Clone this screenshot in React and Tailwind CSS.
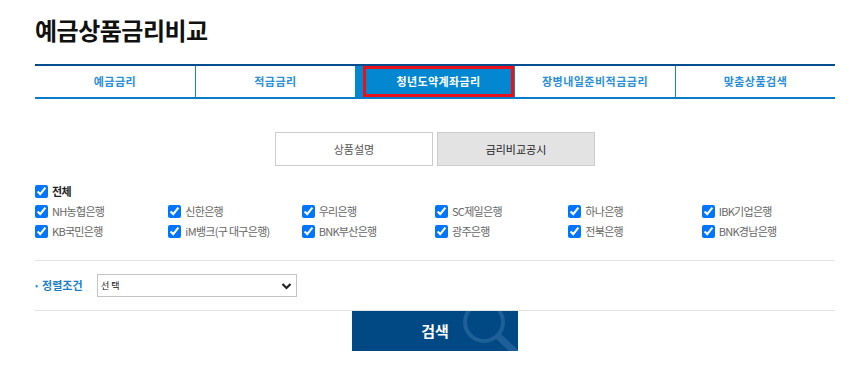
import React from "react";

const font = { fontFamily: '"Noto Sans CJK KR", "Noto Sans", sans-serif' };

const tabs = ["예금금리", "적금금리", "청년도약계좌금리", "장병내일준비적금금리", "맞춤상품검색"];
const banks = [
  "NH농협은행", "신한은행", "우리은행", "SC제일은행", "하나은행", "IBK기업은행",
  "KB국민은행", "iM뱅크(구 대구은행)", "BNK부산은행", "광주은행", "전북은행", "BNK경남은행",
];

function Check({ label, bold }) {
  return (
    <label className="flex items-center h-[20px]">
      <input type="checkbox" defaultChecked className="w-[13px] h-[13px] m-0 accent-[#0075ff]" />
      <span className={`ml-[4px] text-[11px] tracking-[-0.7px] ${bold ? "font-bold text-[#222]" : "text-[#666]"}`}>{label}</span>
    </label>
  );
}

export default function App() {
  return (
    <div className="bg-white w-[857px] h-[371px] overflow-hidden" style={font}>
      <div className="ml-[35px] w-[800px]">
        <h1 className="pt-[15px] h-[64px] text-[24px] leading-[30px] font-bold text-[#111] tracking-[-0.5px]">예금상품금리비교</h1>
        <div className="flex h-[35px] border-t-2 border-t-[#034d8e] border-b-2 border-b-[#0a7bc9]">
          {tabs.map((t, i) => (
            i === 2 ? (
              <div key={t} className="w-[160px] bg-[#0287d0] flex pl-[8px] pr-[1px]">
                <div className="flex-1 border-[3px] border-[#e8101a] flex items-center justify-center text-white text-[11px] font-bold tracking-[0.4px]">{t}</div>
              </div>
            ) : (
              <div key={t} className={`w-[160px] flex items-center justify-center text-[11px] font-bold tracking-[0.5px] text-[#2a8fd8] ${i === 1 || i === 4 ? "border-l border-[#1a7ec8]" : ""}`}>{t}</div>
            )
          ))}
        </div>
        <div className="mt-[33px] flex gap-[4px] ml-[240px]">
          <div className="w-[158px] h-[34px] border border-[#ccc] bg-white flex items-center justify-center text-[11px] text-[#555]">상품설명</div>
          <div className="w-[158px] h-[34px] border border-[#ccc] bg-[#e3e3e3] flex items-center justify-center text-[11px] text-[#222]">금리비교공시</div>
        </div>
        <div className="mt-[15px]">
          <Check label="전체" bold />
          <div className="grid grid-cols-6">
            {banks.map((b) => <Check key={b} label={b} />)}
          </div>
        </div>
        <div className="mt-[19px] border-t border-[#e2e2e2] h-[50px] flex items-center">
          <span className="text-[#2a8fd8] text-[9px] mr-[4px]">•</span>
          <span className="text-[#1c7fc8] text-[11px] font-bold w-[55px]">정렬조건</span>
          <div className="w-[200px] h-[23px] border border-[#c4c4c4] flex items-center justify-between pl-[3px] pr-[4px]">
            <span className="text-[9px] text-[#111]">선 택</span>
            <svg width="11" height="8" viewBox="0 0 11 8"><path d="M1.5 2 L5.5 6 L9.5 2" fill="none" stroke="#222" strokeWidth="2.2" /></svg>
          </div>
        </div>
        <div className="border-t border-[#e2e2e2]">
          <div className="ml-[317px] w-[166px] h-[40px] bg-[#004985] relative overflow-hidden flex items-center justify-center">
            <svg className="absolute left-[100px] top-[-22px]" width="80" height="80" viewBox="0 0 80 80">
              <circle cx="32" cy="33" r="19" fill="none" stroke="#1f5f97" strokeWidth="4" />
              <path d="M46 47 L64 64" stroke="#1f5f97" strokeWidth="7" />
            </svg>
            <span className="relative text-white text-[15px] font-bold">검색</span>
          </div>
        </div>
      </div>
    </div>
  );
}
